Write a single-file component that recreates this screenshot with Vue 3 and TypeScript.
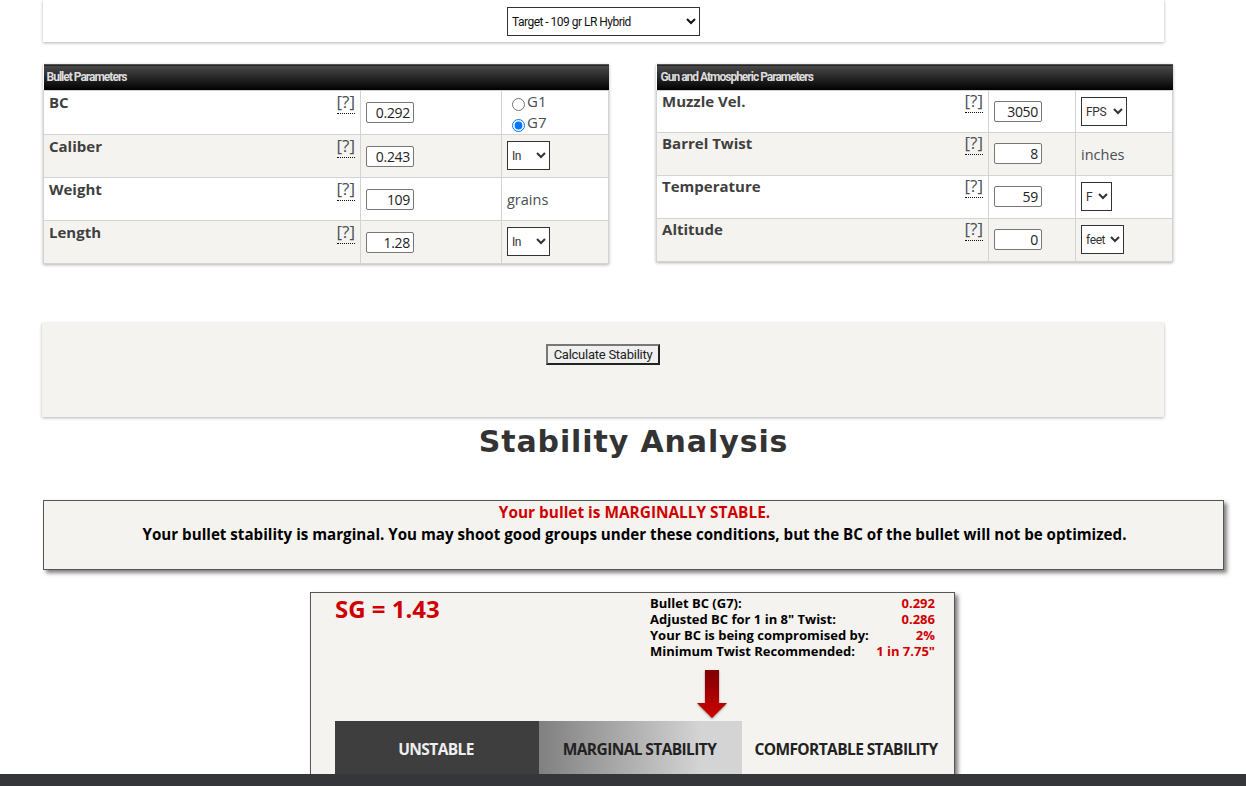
<script setup lang="ts">
interface Row {
  label: string
  value: string
  unit?: string
  options?: string[]
  selectWidth?: number
  radios?: boolean
}

const bullet: Row[] = [
  { label: 'BC', value: '0.292', radios: true },
  { label: 'Caliber', value: '0.243', options: ['In', 'mm'], selectWidth: 43 },
  { label: 'Weight', value: '109', unit: 'grains' },
  { label: 'Length', value: '1.28', options: ['In', 'mm'], selectWidth: 43 },
]
const gun: Row[] = [
  { label: 'Muzzle Vel.', value: '3050', options: ['FPS', 'm/s'], selectWidth: 46 },
  { label: 'Barrel Twist', value: '8', unit: 'inches' },
  { label: 'Temperature', value: '59', options: ['F', 'C'], selectWidth: 31 },
  { label: 'Altitude', value: '0', options: ['feet', 'm'], selectWidth: 43 },
]
const stats = [
  ['Bullet BC (G7):', '0.292'],
  ['Adjusted BC for 1 in 8" Twist:', '0.286'],
  ['Your BC is being compromised by:', '2%'],
  ['Minimum Twist Recommended:', '1 in 7.75"'],
]
const tables = [
  { key: 'bullet', title: 'Bullet Parameters', rows: bullet, widths: [317, 141, 107] },
  { key: 'gun', title: 'Gun and Atmospheric Parameters', rows: gun, widths: [332, 87, 97] },
]
</script>

<template>
  <div class="page">
    <section class="top-card">
      <select class="load-select">
        <option>Target - 109 gr LR Hybrid</option>
      </select>
    </section>

    <div class="tables">
      <table v-for="t in tables" :key="t.key" class="params" :class="t.key">
        <colgroup>
          <col v-for="(w, i) in t.widths" :key="i" :style="{ width: w + 'px' }" />
        </colgroup>
        <thead>
          <tr>
            <th colspan="3">{{ t.title }}</th>
          </tr>
        </thead>
        <tbody>
          <tr v-for="r in t.rows" :key="r.label">
            <td class="label-cell">
              <div class="label-row">
                <span class="label">{{ r.label }}</span>
                <span class="help">[?]</span>
              </div>
            </td>
            <td class="input-cell"><input class="num" type="text" :value="r.value" /></td>
            <td class="unit-cell">
              <div v-if="r.radios" class="radios">
                <label><input type="radio" :name="t.key + 'bc'" />G1</label>
                <label><input type="radio" :name="t.key + 'bc'" checked />G7</label>
              </div>
              <select v-else-if="r.options" class="unit-select" :style="{ width: r.selectWidth + 'px' }">
                <option v-for="o in r.options" :key="o">{{ o }}</option>
              </select>
              <span v-else class="unit">{{ r.unit }}</span>
            </td>
          </tr>
        </tbody>
      </table>
    </div>

    <section class="calc">
      <button class="calc-btn" type="button">Calculate Stability</button>
    </section>

    <h2 class="title">Stability Analysis</h2>

    <section class="notice">
      <div class="notice-red">Your bullet is MARGINALLY STABLE.</div>
      <div>Your bullet stability is marginal. You may shoot good groups under these conditions, but the BC of the bullet will not be optimized.</div>
    </section>

    <section class="result">
      <div class="result-top">
        <div class="sg">SG = 1.43</div>
        <div class="stats">
          <div v-for="s in stats" :key="s[0]" class="stat">
            <span>{{ s[0] }}</span>
            <span class="stat-val">{{ s[1] }}</span>
          </div>
        </div>
      </div>
      <div class="arrow-row">
        <svg class="arrow" width="32" height="50" viewBox="0 0 32 50">
          <defs>
            <linearGradient id="arrowFill" x1="0" y1="0" x2="0" y2="1">
              <stop offset="0" stop-color="#7d0000" />
              <stop offset="1" stop-color="#d00000" />
            </linearGradient>
          </defs>
          <path d="M9 0H23V33H31L16 48L1 33H9Z" fill="url(#arrowFill)" />
        </svg>
      </div>
      <div class="scale">
        <div class="seg seg-a">UNSTABLE</div>
        <div class="seg seg-b">MARGINAL STABILITY</div>
        <div class="seg seg-c">COMFORTABLE STABILITY</div>
      </div>
    </section>

    <footer class="footer"></footer>
  </div>
</template>

<style>
html, body {
  margin: 0;
  height: 100%;
  overflow: hidden;
  background: #fff;
}
</style>

<style scoped>
.page {
  width: 1181px;
  margin-left: 43px;
  font-family: "Open Sans", "Liberation Sans", sans-serif;
  color: #3b3b3b;
}
.top-card {
  width: 1121px;
  height: 42px;
  box-sizing: border-box;
  padding-top: 7px;
  padding-left: 464px;
  background: #fff;
  box-shadow: 0 1px 3px rgba(0, 0, 0, 0.3);
}
.load-select {
  display: block;
  width: 193px;
  height: 29px;
  border: 1px solid #333;
  border-radius: 0;
  background: #fff;
  color: #111;
  font: 12px/1 Roboto, sans-serif;
  letter-spacing: -0.52px;
}
.tables {
  display: flex;
  align-items: flex-start;
  gap: 47px;
  margin-top: 22px;
}
.params {
  table-layout: fixed;
  border-collapse: collapse;
  box-shadow: 0 1px 3px rgba(0, 0, 0, 0.3);
  flex: none;
}
.params.bullet { width: 565px; }
.params.gun { width: 516px; }
.params th {
  height: 26px;
  padding: 0 0 2px 3px;
  box-sizing: border-box;
  text-align: left;
  color: #ddd;
  font: bold 12px/1 Roboto, sans-serif;
  letter-spacing: -1px;
  background: linear-gradient(#4a4a4a, #000);
  border: 0;
  border-top: 1px solid #555;
}
.params.gun th { padding-left: 4px; }
.params td {
  border: 1px solid #d3d3d3;
  vertical-align: top;
  padding: 0;
  height: 43px;
  box-sizing: border-box;
}
.params.bullet tbody tr:first-child td { height: 44px; }
.params.gun tbody tr:first-child td { height: 42px; }
.params tbody tr:nth-child(even) td { background: #f4f3ef; }
.label-row {
  display: flex;
  justify-content: space-between;
  align-items: flex-start;
  padding: 1px 5px 0 5px;
}
.params.gun .label-row { padding-top: 0; }
.label {
  font-weight: 700;
  font-size: 15px;
  line-height: 20px;
  color: #3f3f3f;
}
.help {
  font-size: 17px;
  line-height: 20px;
  padding-bottom: 1px;
  color: #4a4f55;
  border-bottom: 1px dotted #111;
}
.num {
  display: block;
  width: 48px;
  height: 21px;
  box-sizing: border-box;
  margin: 11px 0 0 5px;
  padding: 0 3px;
  border: 1px solid #777;
  border-radius: 2px;
  text-align: right;
  font: 14px "Open Sans", sans-serif;
  letter-spacing: -0.3px;
  color: #222;
  background: #fff;
}
.params.gun .num { margin-top: 10px; }
.unit-select {
  display: block;
  height: 29px;
  margin: 6px 0 0 5px;
  padding: 0;
  border: 1px solid #333;
  border-radius: 0;
  background: #fff;
  color: #333;
  font: 12px Roboto, sans-serif;
  letter-spacing: -0.4px;
}
.params.gun .unit-select { margin: 6px 0 0 5px; }
.unit {
  display: block;
  margin: 12px 0 0 5px;
  font-size: 14.5px;
  line-height: 20px;
  color: #4a4f55;
}
.radios {
  display: flex;
  flex-direction: column;
  padding: 0 0 0 10px;
  font-size: 15px;
  line-height: 21px;
  color: #4a4f55;
}
.radios label {
  display: flex;
  align-items: center;
  height: 21px;
}
.radios input {
  margin: 5px 2px 0 0;
}
.calc {
  width: 1122px;
  height: 94px;
  box-sizing: border-box;
  margin: 59px 0 0 -1px;
  padding-top: 21px;
  display: flex;
  justify-content: center;
  align-items: flex-start;
  background: #f4f3ef;
  box-shadow: 0 1px 3px rgba(0, 0, 0, 0.3);
}
.calc-btn {
  height: 21px;
  width: 114px;
  padding: 0;
  border: 2px solid;
  border-color: #777 #222 #222 #777;
  background: #efefef;
  color: #222;
  font: 13px/1 Roboto, sans-serif;
  letter-spacing: -0.25px;
}
.title {
  margin: 0;
  height: 83px;
  padding-top: 9px;
  box-sizing: border-box;
  text-align: center;
  font: 700 30px/32px "DejaVu Sans", sans-serif;
  letter-spacing: 0.9px;
  color: #333;
}
.notice {
  height: 70px;
  box-sizing: border-box;
  padding: 1px 0 0 2px;
  border: 1px solid #555;
  background: #f4f3ef;
  box-shadow: 3px 3px 4px rgba(0, 0, 0, 0.5);
  text-align: center;
  font-weight: 700;
  font-size: 15.15px;
  line-height: 22px;
  color: #000;
}
.notice-red {
  color: #d00000;
  font-size: 15.4px;
  line-height: 21px;
}
.result {
  width: 645px;
  height: 240px;
  box-sizing: border-box;
  margin: 22px 0 0 267px;
  padding: 0 9px 0 24px;
  border: 1px solid #555;
  border-bottom: 0;
  background: #f4f3ef;
  box-shadow: 3px 3px 4px rgba(0, 0, 0, 0.5);
}
.result-top {
  display: flex;
  justify-content: space-between;
  height: 77px;
}
.sg {
  margin-top: 0;
  font-size: 24px;
  line-height: 31px;
  font-weight: 700;
  color: #d00000;
}
.stats {
  width: 285px;
  margin-top: 2px;
  margin-right: 10px;
  font-size: 13px;
  line-height: 16px;
  font-weight: 700;
  color: #000;
}
.stat {
  display: flex;
  justify-content: space-between;
}
.stat-val {
  color: #d00000;
}
.arrow-row {
  height: 51px;
  padding-left: 361px;
}
.arrow {
  display: block;
  filter: drop-shadow(0 1px 1px rgba(0, 0, 0, 0.4));
}
.scale {
  display: grid;
  grid-template-columns: 204px 203px 204px;
  height: 60px;
}
.seg {
  display: flex;
  justify-content: center;
  padding-top: 16px;
  box-sizing: border-box;
  font-size: 15.5px;
  line-height: 24px;
  font-weight: 700;
  letter-spacing: -0.6px;
  white-space: nowrap;
}
.seg-a {
  padding-right: 2px;
  background: #3e3e3e;
  color: #eee;
}
.seg-b {
  padding-right: 2px;
  background: linear-gradient(90deg, #808080, #d4d4d4 80%);
  color: #222;
}
.seg-c {
  padding-left: 4px;
  color: #222;
}
.footer {
  position: fixed;
  left: 0;
  right: 0;
  bottom: 0;
  height: 12px;
  background: #35363a;
}
</style>
